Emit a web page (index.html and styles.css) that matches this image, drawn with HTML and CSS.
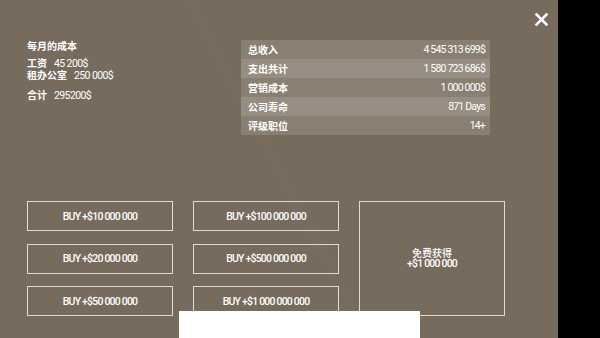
FILE: index.html
```html
<!doctype html>
<html lang="zh">
<head>
    <meta charset="UTF-8">
    <meta name="viewport" content="width=device-width, initial-scale=1.0">
    <title>财务</title>
    <link rel="stylesheet" href="styles.css">
</head>
<body>
    <div class="screen">
        <div class="panel">
            <button class="close" aria-label="关闭">
                <svg width="13" height="13" viewBox="0 0 13 13">
                    <path d="M1.5 1.5 L11.5 11.5 M11.5 1.5 L1.5 11.5" stroke="#fff" stroke-width="2.6" stroke-linecap="square"/>
                </svg>
            </button>

            <div class="top">
                <div class="costs">
                    <div class="costs-title">每月的成本</div>
                    <div class="costs-list">
                        <div>工资<span class="num">45 200$</span></div>
                        <div>租办公室<span class="num">250 000$</span></div>
                    </div>
                    <div class="costs-total">合计<span class="num">295200$</span></div>
                </div>

                <table class="stats">
                    <tr class="dark"><td>总收入</td><td class="val">4 545 313 699$</td></tr>
                    <tr class="light"><td>支出共计</td><td class="val">1 580 723 686$</td></tr>
                    <tr class="dark"><td>营销成本</td><td class="val">1 000 000$</td></tr>
                    <tr class="light"><td>公司寿命</td><td class="val">871 Days</td></tr>
                    <tr class="dark"><td>评级职位</td><td class="val">14+</td></tr>
                </table>
            </div>

            <div class="buy">
                <button class="btn">BUY +$10 000 000</button>
                <button class="btn">BUY +$100 000 000</button>
                <button class="btn free"><span class="cn">免费获得</span><br>+$1 000 000</button>
                <button class="btn">BUY +$20 000 000</button>
                <button class="btn">BUY +$500 000 000</button>
                <button class="btn">BUY +$50 000 000</button>
                <button class="btn">BUY +$1 000 000 000</button>
            </div>

            <div class="banner"></div>
        </div>
        <div class="side"></div>
    </div>
</body>
</html>
```

FILE: styles.css
```css
body{
    margin: 0;
    padding: 0;
    background: #000;
    font-family: Roboto, "Noto Sans CJK SC", sans-serif;
    color: #fff;
}
.screen{
    display: flex;
    width: 600px;
    height: 338px;
    overflow: hidden;
}
.panel{
    position: relative;
    width: 558px;
    height: 338px;
    background: #776b5d;
    background-image: linear-gradient(62deg, transparent 49.7%, rgba(255,255,255,.025) 49.85%, transparent 50.1%);
}
.side{
    flex: 1;
    background: #000;
}
.close{
    position: absolute;
    top: 13px;
    left: 535px;
    padding: 0;
    border: none;
    background: none;
    cursor: pointer;
}
.top{
    display: flex;
    padding: 40px 0 0 27px;
    height: 201px;
    box-sizing: border-box;
}
.costs{
    width: 214px;
    font-size: 10px;
    line-height: 11px;
    font-family: "Noto Sans CJK SC", sans-serif;
    font-weight: bold;
}
.costs .num{
    font-family: Roboto, sans-serif;
    font-weight: normal;
    font-size: 10.5px;
    letter-spacing: -0.6px;
    margin-left: 7px;
}
.costs-list{
    margin-top: 6px;
}
.costs-total{
    margin-top: 8px;
}
.stats{
    width: 249px;
    height: 94px;
    border-collapse: collapse;
}
.stats td{
    padding: 0 5px 0 7px;
    height: 19px;
    font-family: "Noto Sans CJK SC", sans-serif;
    font-weight: bold;
    font-size: 10px;
}
.stats td.val{
    text-align: right;
    font-family: Roboto, sans-serif;
    font-weight: normal;
    font-size: 10.5px;
    letter-spacing: -0.8px;
}
.stats .dark{
    background: #8a7f73;
}
.stats .light{
    background: #978d82;
}
.buy{
    display: grid;
    grid-template-columns: 146px 146px 146px;
    grid-template-rows: 30px 30px 30px;
    column-gap: 20px;
    row-gap: 12.5px;
    padding-left: 27px;
}
.btn{
    border: 1.5px solid #e6dccd;
    background: transparent;
    color: #fff;
    font-family: Roboto, "Noto Sans CJK SC", sans-serif;
    font-size: 10.5px;
    font-weight: 500;
    letter-spacing: -0.8px;
    padding: 0;
    cursor: pointer;
}
.free{
    grid-column: 3;
    grid-row: 1 / span 3;
    line-height: 10px;
}
.free .cn{
    letter-spacing: 0;
    font-size: 10px;
}
.banner{
    position: absolute;
    left: 179px;
    top: 311px;
    width: 241px;
    height: 27px;
    background: #fff;
}
```
